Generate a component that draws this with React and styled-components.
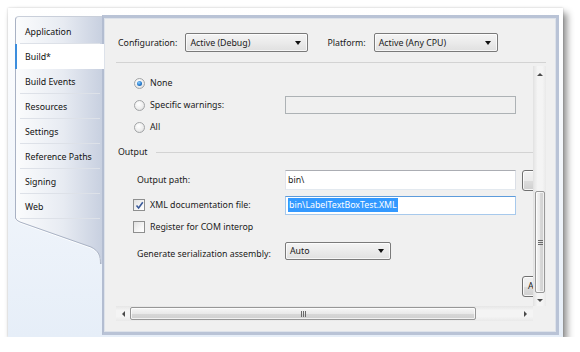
import React from "react";
import styled, { createGlobalStyle } from "styled-components";

const GlobalStyle = createGlobalStyle`
  html, body { margin: 0; padding: 0; background: #ffffff; }
  body {
    font-family: "Noto Sans", "Open Sans", sans-serif;
    font-size: 8.8px;
    color: #1a1a1a;
  }
  * { box-sizing: border-box; }
`;

const Window = styled.div`
  margin: 8px 0 0 8px;
  width: 555px;
  height: 329px;
  padding: 7px 4px 2px 7px;
  display: flex;
  background: linear-gradient(to bottom, #ffffff 0%, #f5f8fc 35%, #e6eef8 100%);
  box-shadow: 0 0 2px rgba(0, 0, 0, 0.2), 4px 5px 7px rgba(0, 0, 0, 0.45);
`;

const TabStrip = styled.div`
  width: 87px;
  margin-top: 1px;
  display: flex;
  flex-direction: column;
  position: relative;
  z-index: 1;
`;

const TabList = styled.div`
  display: flex;
  flex-direction: column;
  padding-top: 2px;
  border-left: 1px solid #a9b2c4;
  border-top: 1px solid #c9cfda;
  border-top-left-radius: 4px;
  background: linear-gradient(to right, #fbfcfd 0%, #e7ebf2 55%, #c8d0e0 100%);
`;

const Tab = styled.div`
  height: 25px;
  display: flex;
  align-items: center;
  padding-left: ${(p) => (p.$active ? "8px" : "9px")};
  position: relative;
  margin-left: ${(p) => (p.$active ? "-1px" : "0")};
  margin-right: ${(p) => (p.$active ? "-2px" : "0")};
  background: ${(p) => (p.$active ? "#ffffff" : "transparent")};
  border-left: ${(p) => (p.$active ? "2px solid #3b8ddd" : "none")};
  color: #111;

  &::after {
    content: "";
    position: absolute;
    left: 4px;
    right: 2px;
    bottom: 0;
    height: 1px;
    background: ${(p) => (p.$active ? "transparent" : "#dde1e8")};
  }
`;

const Tail = styled.svg`
  display: block;
  width: 87px;
  height: 46px;
  margin-top: -1px;
`;

const Panel = styled.div`
  flex: 1;
  display: flex;
  flex-direction: column;
  background: #f0f0f0;
  border: 3px solid #b9c3d6;
  border-left: 2px solid #b3bdd1;
  box-shadow: inset 0 0 0 1px #dde2ea;
`;

const Header = styled.div`
  display: flex;
  align-items: center;
  height: 19px;
  margin: 15px 0 0 14px;
`;

const HeaderLabel = styled.span`
  margin-right: 8px;
  margin-left: ${(p) => p.$gap || 0}px;
`;

const Combo = styled.div`
  width: ${(p) => p.$w}px;
  height: ${(p) => p.$h || 19}px;
  border: 1px solid #7a7a7a;
  border-radius: 2px;
  background: linear-gradient(to bottom, #f4f4f4 0%, #ebebeb 50%, #e0e0e0 100%);
  display: flex;
  align-items: center;
  justify-content: space-between;
  padding: 0 6px 0 4px;
  box-shadow: inset 0 0 0 1px rgba(255, 255, 255, 0.7);
`;

const Arrow = styled.span`
  width: 0;
  height: 0;
  border-left: 3.5px solid transparent;
  border-right: 3.5px solid transparent;
  border-top: 4px solid #111;
`;

const Separator = styled.div`
  height: 1px;
  background: #d3d3d3;
  margin: 10px 10px 0 12px;
`;

const Body = styled.div`
  flex: 1;
  display: grid;
  grid-template-columns: 415px 13px;
  grid-template-rows: 240px 15px;
  margin: 3px 10px 0 14px;
`;

const Viewport = styled.div`
  overflow: hidden;
  padding-top: 6px;
`;

const Row = styled.div`
  display: grid;
  grid-template-columns: 161px 231px 80px;
  column-gap: 6px;
  align-items: center;
  height: ${(p) => p.$h || 22}px;
  margin-top: ${(p) => p.$mt || 0}px;
  width: 600px;
`;

const Choice = styled.label`
  display: flex;
  align-items: center;
  gap: 5px;
  padding-left: 16px;
  white-space: nowrap;
`;

const FieldLabel = styled.span`
  padding-left: 19px;
  white-space: nowrap;
  padding-top: ${(p) => p.$dy || 0}px;
`;

const Radio = styled.span`
  width: 11px;
  height: 11px;
  border-radius: 50%;
  border: 1px solid #a2a4a6;
  background: radial-gradient(circle at 40% 35%, #ffffff 0%, #eeeeee 55%, #d4d4d4 100%);
  display: flex;
  align-items: center;
  justify-content: center;

  &::after {
    content: "";
    width: 5px;
    height: 5px;
    border-radius: 50%;
    background: ${(p) =>
      p.$checked ? "radial-gradient(circle at 40% 35%, #8fd0ff 0%, #2a7fd0 50%, #104c92 100%)" : "transparent"};
  }
`;

const Check = styled.span`
  width: 12px;
  height: 12px;
  border: 1px solid #8e8f8f;
  background: linear-gradient(135deg, #e0e0e0 0%, #f6f6f6 60%, #ffffff 100%);
  display: flex;
  align-items: center;
  justify-content: center;
  margin-left: -1px;
`;

const TextBox = styled.div`
  height: ${(p) => p.$h || 20}px;
  border: 1px solid;
  border-color: ${(p) => (p.$focus ? "#5d9bdb #a7c9ec #a7c9ec #a7c9ec" : "#abadb3 #dbdfe6 #e3e9ef #e2e3ea")};
  background: ${(p) => (p.$disabled ? "#f0f0f0" : "#ffffff")};
  display: flex;
  align-items: center;
  padding-left: 2px;
  ${(p) => p.$disabled && "border-color: #adb2b5;"}
`;

const Selected = styled.span`
  background: #3399ff;
  color: #ffffff;
  padding: 1px 1px;
`;

const Button = styled.div`
  height: 21px;
  width: ${(p) => p.$w || 75}px;
  border: 1px solid #707070;
  border-radius: 3px;
  background: linear-gradient(to bottom, #f2f2f2 0%, #ebebeb 50%, #dddddd 51%, #cfcfcf 100%);
  box-shadow: inset 0 0 0 1px rgba(255, 255, 255, 0.8);
  display: flex;
  align-items: center;
  justify-content: ${(p) => (p.$center ? "center" : "flex-start")};
  padding-left: ${(p) => (p.$center ? 0 : 5)}px;
`;

const GroupHeader = styled.div`
  display: flex;
  align-items: center;
  height: 22px;
  margin-top: 3px;

  &::after {
    content: "";
    flex: 1;
    height: 1px;
    background: #d3d3d3;
    margin-left: 8px;
  }
`;

const VScroll = styled.div`
  display: flex;
  flex-direction: column;
  background: linear-gradient(to right, #e6e6e6, #f4f4f4 30%, #f4f4f4 70%, #e9e9e9);
  border-left: 1px solid #e3e3e3;
`;

const HScroll = styled.div`
  display: flex;
  align-items: stretch;
  background: linear-gradient(to bottom, #e6e6e6, #f4f4f4 30%, #f4f4f4 70%, #e9e9e9);
  padding: 1px 0;
  margin-left: -2px;
`;

const ArrowBox = styled.div`
  flex: 0 0 ${(p) => p.$size}px;
  display: flex;
  align-items: center;
  justify-content: center;
`;

const Tri = styled.span`
  width: 0;
  height: 0;
  ${(p) =>
    ({
      up: "border-left: 3px solid transparent; border-right: 3px solid transparent; border-bottom: 3px solid #4a4a4a;",
      down: "border-left: 3px solid transparent; border-right: 3px solid transparent; border-top: 3px solid #4a4a4a;",
      left: "border-top: 3px solid transparent; border-bottom: 3px solid transparent; border-right: 3px solid #4a4a4a;",
      right: "border-top: 3px solid transparent; border-bottom: 3px solid transparent; border-left: 3px solid #4a4a4a;",
    })[p.$dir]}
`;

const Track = styled.div`
  flex: 1;
  display: flex;
  flex-direction: ${(p) => (p.$vertical ? "column" : "row")};
  padding: ${(p) => (p.$vertical ? "0 1px" : "0")};
`;

const Thumb = styled.div`
  flex: 0 0 ${(p) => p.$len}px;
  border: 1px solid #979797;
  border-radius: 2px;
  background: ${(p) =>
    p.$vertical
      ? "linear-gradient(to right, #f6f6f6 0%, #e9e9e9 50%, #d8d8d8 51%, #d0d0d0 100%)"
      : "linear-gradient(to bottom, #f6f6f6 0%, #e9e9e9 50%, #d8d8d8 51%, #d0d0d0 100%)"};
  box-shadow: inset 0 0 0 1px rgba(255, 255, 255, 0.7);
  display: flex;
  align-items: center;
  justify-content: center;
`;

const Grip = styled.span`
  display: flex;
  flex-direction: ${(p) => (p.$vertical ? "column" : "row")};
  gap: 1px;

  & > i {
    display: block;
    background: #6a6a6a;
    width: ${(p) => (p.$vertical ? "5px" : "1px")};
    height: ${(p) => (p.$vertical ? "1px" : "6px")};
  }
`;

const Corner = styled.div``;

const tabs = [
  "Application",
  "Build*",
  "Build Events",
  "Resources",
  "Settings",
  "Reference Paths",
  "Signing",
  "Web",
];

const CheckMark = () => (
  <svg width="9" height="9" viewBox="0 0 9 9">
    <path d="M1.5 4.5 L3.6 7 L7.8 1.2" fill="none" stroke="#3a5a9a" strokeWidth="1.6" />
  </svg>
);

const Scrollbar = ({ vertical, offset, len }) => {
  const a = vertical ? ["up", "down"] : ["left", "right"];
  return (
    <>
      <ArrowBox $size={vertical ? 16 : 14}>
        <Tri $dir={a[0]} />
      </ArrowBox>
      <Track $vertical={vertical}>
        <div style={{ flex: `0 0 ${offset}px` }} />
        <Thumb $vertical={vertical} $len={len}>
          <Grip $vertical={vertical}>
            <i />
            <i />
            <i />
          </Grip>
        </Thumb>
      </Track>
      <ArrowBox $size={vertical ? 12 : 15}>
        <Tri $dir={a[1]} />
      </ArrowBox>
    </>
  );
};

export default function App() {
  return (
    <>
      <GlobalStyle />
      <Window>
        <TabStrip>
          <TabList>
            {tabs.map((t) => (
              <Tab key={t} $active={t === "Build*"}>
                {t}
              </Tab>
            ))}
          </TabList>
          <Tail viewBox="0 0 87 46">
            <defs>
              <linearGradient id="tailg" x1="0" x2="1" y1="0" y2="0">
                <stop offset="0" stopColor="#fbfcfd" />
                <stop offset="0.55" stopColor="#e7ebf2" />
                <stop offset="1" stopColor="#c8d0e0" />
              </linearGradient>
            </defs>
            <path d="M0 0 H87 V46 H86 C86 38 84 33 76 29 L5 4 Q1 2.5 0 0 Z" fill="url(#tailg)" />
            <path d="M0.5 0 Q1 2.5 5 4 L76 29 C84 33 85.5 38 85.5 46" fill="none" stroke="#fdfeff" strokeWidth="1" transform="translate(0 1)" />
            <path d="M0.5 0 Q1 2.5 5 4 L76 29 C84 33 85.5 38 85.5 46" fill="none" stroke="#a9b2c4" strokeWidth="1" />
          </Tail>
        </TabStrip>
        <Panel>
          <Header>
            <HeaderLabel>Configuration:</HeaderLabel>
            <Combo $w={123}>
              Active (Debug)
              <Arrow />
            </Combo>
            <HeaderLabel $gap={19}>Platform:</HeaderLabel>
            <Combo $w={124}>
              Active (Any CPU)
              <Arrow />
            </Combo>
          </Header>
          <Separator />
          <Body>
            <Viewport>
              <Row>
                <Choice>
                  <Radio $checked />
                  None
                </Choice>
              </Row>
              <Row>
                <Choice>
                  <Radio />
                  Specific warnings:
                </Choice>
                <TextBox $disabled $h={18} />
              </Row>
              <Row>
                <Choice>
                  <Radio />
                  All
                </Choice>
              </Row>
              <GroupHeader>Output</GroupHeader>
              <Row $mt={6}>
                <FieldLabel>Output path:</FieldLabel>
                <TextBox>bin\</TextBox>
                <Button $w={34} $center>...</Button>
              </Row>
              <Row $mt={3}>
                <Choice>
                  <Check>
                    <CheckMark />
                  </Check>
                  XML documentation file:
                </Choice>
                <TextBox $focus $h={19}>
                  <Selected>bin\LabelTextBoxTest.XML</Selected>
                </TextBox>
              </Row>
              <Row>
                <Choice>
                  <Check />
                  Register for COM interop
                </Choice>
              </Row>
              <Row $mt={2}>
                <FieldLabel $dy={5}>Generate serialization assembly:</FieldLabel>
                <Combo $w={106} $h={18}>
                  Auto
                  <Arrow />
                </Combo>
              </Row>
              <Row $mt={13}>
                <span />
                <span />
                <Button>Advanced...</Button>
              </Row>
            </Viewport>
            <VScroll>
              <Scrollbar vertical offset={109} len={102} />
            </VScroll>
            <HScroll>
              <Scrollbar offset={0} len={346} />
            </HScroll>
            <Corner />
          </Body>
        </Panel>
      </Window>
    </>
  );
}
